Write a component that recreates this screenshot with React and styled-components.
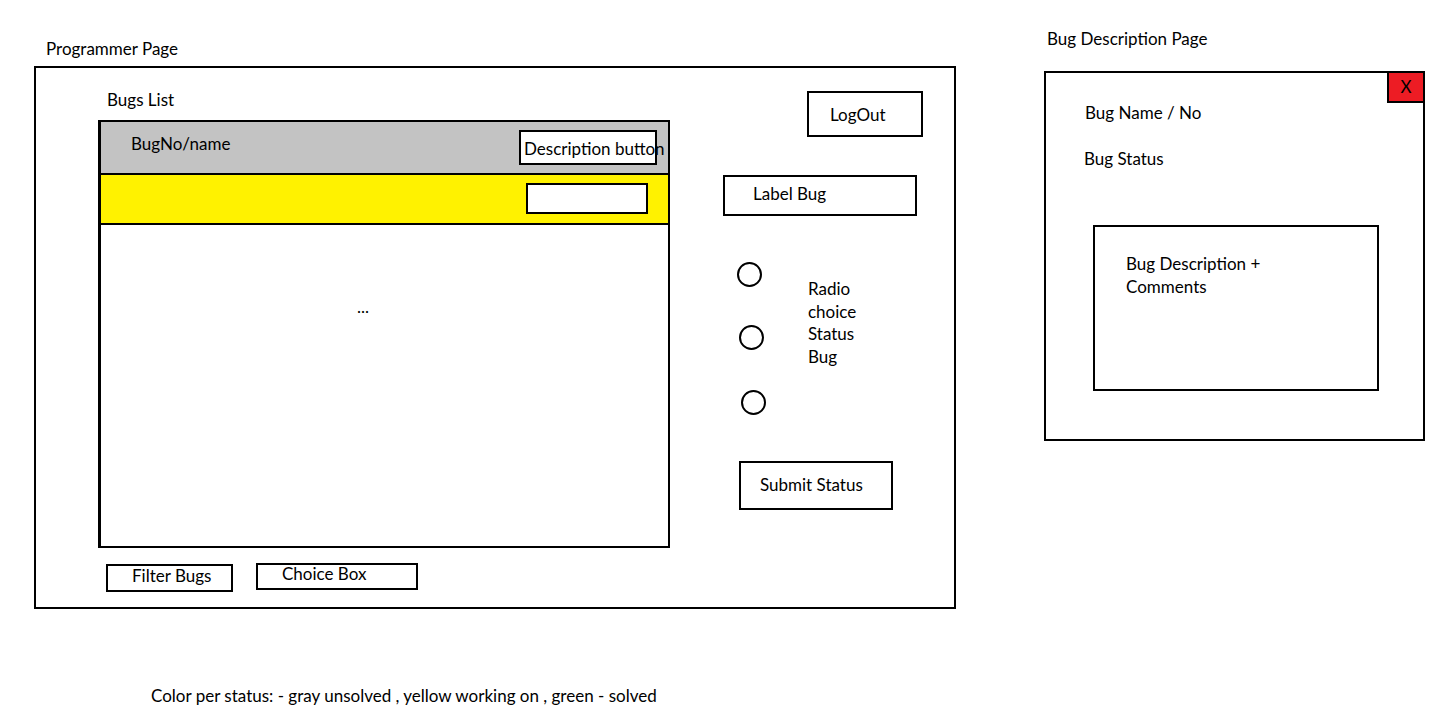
import React from 'react'
import styled, { createGlobalStyle } from 'styled-components'

const GlobalStyle = createGlobalStyle`
  html, body {
    margin: 0;
    padding: 0;
    background: #fff;
  }
  body {
    font-family: Lato, "Open Sans", sans-serif;
    font-size: 17px;
    color: #000;
  }
  * {
    box-sizing: border-box;
  }
`

const Canvas = styled.div`
  width: 1450px;
  height: 722px;
  display: flex;
  align-items: flex-start;
  overflow: hidden;
`

const LeftColumn = styled.div`
  margin-left: 34px;
  padding-top: 39px;
  width: 922px;
`

const RightColumn = styled.div`
  margin-left: 88px;
  padding-top: 29px;
  width: 381px;
`

const Title = styled.div`
  line-height: 20px;
  height: 20px;
  padding-left: ${(p) => p.$indent || 0}px;
  margin-bottom: ${(p) => p.$gap || 0}px;
  white-space: nowrap;
`

const Frame = styled.div`
  border: 2px solid #000;
  height: ${(p) => p.$height}px;
  display: flex;
  ${(p) => p.$column && 'flex-direction: column;'}
`

/* ---------- programmer page ---------- */

const ListArea = styled.div`
  margin-left: 62px;
  width: 572px;
  display: flex;
  flex-direction: column;
`

const ListLabel = styled.div`
  padding-top: 22px;
  margin-left: 9px;
  margin-bottom: 10px;
  line-height: 20px;
`

const Table = styled.div`
  border: 2px solid #000;
  border-left-width: 3px;
  height: 428px;
  display: flex;
  flex-direction: column;
`

const Row = styled.div`
  height: ${(p) => p.$height}px;
  background: ${(p) => p.$bg};
  border-bottom: 2px solid #000;
  display: flex;
  justify-content: space-between;
  align-items: flex-start;
  padding: ${(p) => p.$pad};
`

const CellText = styled.span`
  margin-top: 4px;
  line-height: 20px;
`

// $dy nudges the label up (negative) or down (positive) inside the box
const Box = styled.div`
  width: ${(p) => p.$w}px;
  height: ${(p) => p.$h}px;
  margin-top: ${(p) => p.$top || 0}px;
  margin-left: ${(p) => p.$left || 0}px;
  border: 2px solid #000;
  background: #fff;
  display: flex;
  align-items: center;
  padding-left: ${(p) => p.$pad || 0}px;
  padding-top: ${(p) => Math.max(0, 2 * (p.$dy || 0))}px;
  padding-bottom: ${(p) => Math.max(0, -2 * (p.$dy || 0))}px;
  white-space: nowrap;
  line-height: 20px;
  flex-shrink: 0;
`

const TableBody = styled.div`
  flex: 1;
  padding: 72px 0 0 256px;
  line-height: 20px;
`

const FilterRow = styled.div`
  display: flex;
  align-items: flex-start;
  gap: 23px;
  margin-top: 15px;
  margin-left: 8px;
`

const SideArea = styled.div`
  margin-left: 53px;
  width: 200px;
  display: flex;
  flex-direction: column;
  align-items: flex-start;
`

const RadioGroup = styled.div`
  display: flex;
  margin-top: 46px;
  margin-left: 14px;
`

const RadioColumn = styled.div`
  display: flex;
  flex-direction: column;
  width: 71px;
`

const Radio = styled.span`
  width: 25px;
  height: 25px;
  border: 2px solid #000;
  border-radius: 50%;
  margin-left: ${(p) => p.$shift}px;
  margin-top: ${(p) => p.$top}px;
`

const RadioText = styled.div`
  margin-top: 16px;
  line-height: 22.7px;
  width: 60px;
`

/* ---------- bug description page ---------- */

const CloseBar = styled.div`
  display: flex;
  justify-content: flex-end;
`

const CloseButton = styled.div`
  width: 36px;
  height: 30px;
  background: #ed1c24;
  border-left: 2px solid #000;
  border-bottom: 2px solid #000;
  display: flex;
  align-items: center;
  justify-content: center;
  line-height: 20px;
`

const InfoLine = styled.div`
  line-height: 20px;
  margin-left: ${(p) => p.$left}px;
  margin-top: ${(p) => p.$top}px;
`

const DescriptionBox = styled.div`
  width: 286px;
  height: 166px;
  margin-left: 47px;
  margin-top: 56px;
  border: 2px solid #000;
  padding: 26px 0 0 31px;
  line-height: 22.7px;
`

const Note = styled.div`
  margin-top: 77px;
  margin-left: 117px;
  line-height: 20px;
  white-space: nowrap;
`

export default function App() {
  return (
    <>
      <GlobalStyle />
      <Canvas>
        <LeftColumn>
          <Title $indent={12} $gap={7}>Programmer Page</Title>
          <Frame $height={543}>
            <ListArea>
              <ListLabel>Bugs List</ListLabel>
              <Table>
                <Row $height={53} $bg="#c3c3c3" $pad="8px 11px 0 30px">
                  <CellText>BugNo/name</CellText>
                  <Box $w={138} $h={35} $pad={3} $dy={1}>Description button</Box>
                </Row>
                <Row $height={50} $bg="#fff200" $pad="8px 20px 0 0">
                  <span />
                  <Box $w={122} $h={31} />
                </Row>
                <TableBody>...</TableBody>
              </Table>
              <FilterRow>
                <Box $w={127} $h={28} $top={1} $pad={24} $dy={-2}>Filter Bugs</Box>
                <Box $w={162} $h={27} $pad={24} $dy={-3}>Choice Box</Box>
              </FilterRow>
            </ListArea>
            <SideArea>
              <Box $w={116} $h={46} $top={23} $left={84} $pad={21} $dy={1}>LogOut</Box>
              <Box $w={194} $h={41} $top={38} $pad={28} $dy={-2}>Label Bug</Box>
              <RadioGroup>
                <RadioColumn>
                  <Radio $shift={0} $top={0} />
                  <Radio $shift={2} $top={38} />
                  <Radio $shift={4} $top={40} />
                </RadioColumn>
                <RadioText>Radio choice Status Bug</RadioText>
              </RadioGroup>
              <Box $w={154} $h={49} $top={46} $left={16} $pad={19} $dy={-1}>Submit Status</Box>
            </SideArea>
          </Frame>
          <Note>Color per status: - gray unsolved , yellow working on , green - solved</Note>
        </LeftColumn>
        <RightColumn>
          <Title $indent={3} $gap={22}>Bug Description Page</Title>
          <Frame $height={370} $column>
            <CloseBar>
              <CloseButton>X</CloseButton>
            </CloseBar>
            <InfoLine $left={39} $top={0}>Bug Name / No</InfoLine>
            <InfoLine $left={38} $top={26}>Bug Status</InfoLine>
            <DescriptionBox>
              Bug Description +<br />
              Comments
            </DescriptionBox>
          </Frame>
        </RightColumn>
      </Canvas>
    </>
  )
}
